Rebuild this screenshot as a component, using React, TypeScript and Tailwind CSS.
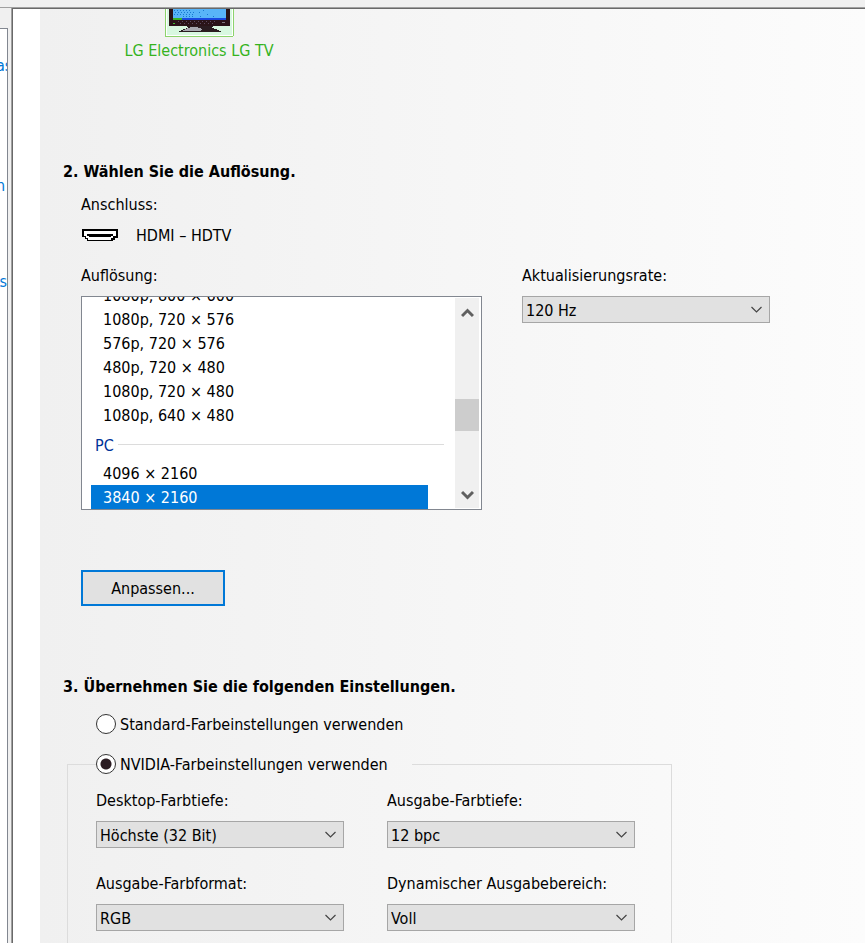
import { useId } from 'react';
import type { ReactNode } from 'react';

const resolutions = [
  '1080p, 800 × 600',
  '1080p, 720 × 576',
  '576p, 720 × 576',
  '480p, 720 × 480',
  '1080p, 720 × 480',
  '1080p, 640 × 480',
];

const pcResolutions = ['4096 × 2160', '3840 × 2160'];

function SelectField({ label, options }: { label: string; options: string[] }) {
  const id = useId();
  return (
    <div className="w-[248px]">
      <label htmlFor={id} className="block h-6 leading-[26px] mb-[9px] whitespace-nowrap">{label}</label>
      <div className="relative">
        <select
          id={id}
          className="block w-full h-[27px] appearance-none bg-[#e1e1e1] border border-[#a6a6a6] pt-0.5 pl-[3px] pr-7 outline-none"
        >
          {options.map((option) => (
            <option key={option}>{option}</option>
          ))}
        </select>
        <svg className="absolute right-2 top-2 pointer-events-none" width="11" height="11" viewBox="0 0 11 11" fill="none">
          <path d="M0.5 3 L5.5 8 L10.5 3" stroke="#444" strokeWidth="1.2" />
        </svg>
      </div>
    </div>
  );
}

function Radio({ children, checked }: { children: ReactNode; checked?: boolean }) {
  return (
    <label className="flex items-center h-6 leading-[26px] gap-1 whitespace-nowrap">
      <input
        type="radio"
        name="color-settings"
        defaultChecked={checked}
        className="appearance-none size-5 shrink-0 rounded-full bg-white border border-[#333] checked:bg-[radial-gradient(circle,#2b1c22_5px,white_6px)]"
      />
      <span className="h-6">{children}</span>
    </label>
  );
}

function TvIcon() {
  return (
    <svg width="69" height="29" viewBox="0 0 69 29" className="block" shapeRendering="crispEdges">
      <rect x="0" y="-6" width="69" height="34" rx="2" fill="#8cd46c" />
      <rect x="1" y="-6" width="67" height="33" fill="#fff" />
      <rect x="2" y="-6" width="65" height="32" fill="#d8f8e0" />
      <rect x="4" y="-6" width="61" height="23" fill="#2a1418" />
      <rect x="8" y="-6" width="53" height="16" fill="#58b4f8" />
      <path d="M9 1.5h17M10 3.5h20M9 5.5h20M18 7.5h12" stroke="#1878d0" strokeDasharray="1 2" />
      <path d="M34 3.5h1M38 1.5h1M42 5.5h1M48 7.5h1M35 7.5h1" stroke="#1878d0" />
      <rect x="8" y="9" width="53" height="2" fill="#1848e0" />
      <rect x="8" y="9" width="9" height="2" fill="#38b428" />
      <path d="M8 14.5h2" stroke="#40c030" />
      <path d="M13 12.5h38M15 14.5h36" stroke="#5c4a60" strokeDasharray="1 3" />
      <path d="M57 13.5h3" stroke="#807880" />
      <path d="M22 17h26v1h-1v1h2v1h3v1h2v1h2v1H14v-1h2v-1h2v-1h3v-1h2v-1h-1z" fill="#2a1c20" />
      <path d="M25 18h8v1h3v1h1v1h-1v1H18v-1h2v-1h2v-1h3z" fill="#a8a8b0" />
    </svg>
  );
}

function Scrollbar() {
  return (
    <div className="w-6 shrink-0 my-px mr-0.5 bg-[#f0f0f0] flex flex-col">
      <button aria-label="Nach oben" className="h-7 w-full flex items-center justify-center">
        <svg width="13" height="11" viewBox="0 0 13 11" fill="none">
          <path d="M1 9 L6.5 3.5 L12 9" stroke="#606060" strokeWidth="3" />
        </svg>
      </button>
      <div className="h-8 w-full bg-[#cdcdcd] mt-[73px]" />
      <div className="grow" />
      <button aria-label="Nach unten" className="h-7 w-full flex items-center justify-center">
        <svg width="13" height="11" viewBox="0 0 13 11" fill="none">
          <path d="M1 3 L6.5 8.5 L12 3" stroke="#606060" strokeWidth="3" />
        </svg>
      </button>
    </div>
  );
}

function ResolutionList() {
  return (
    <div role="listbox" aria-label="Auflösung" className="w-[401px] h-[214px] flex bg-white border border-[#828790] overflow-hidden">
      <div className="grow pl-[9px] flex flex-col justify-end overflow-hidden">
        {resolutions.map((r) => (
          <div key={r} role="option" aria-selected={false} className="h-6 shrink-0 leading-[26px] pl-3">{r}</div>
        ))}
        <div className="h-[34px] shrink-0 flex items-center gap-1 pl-1 pr-[11px] text-[#003399]">
          <span className="pt-1">PC</span>
          <div className="grow h-px bg-[#dcdcdc]" />
        </div>
        {pcResolutions.map((r) => (
          <div
            key={r}
            role="option"
            aria-selected={r === '3840 × 2160'}
            className="h-6 shrink-0 leading-[26px] pl-3 mr-[27px] aria-selected:bg-[#0078d7] aria-selected:text-white"
          >
            {r}
          </div>
        ))}
      </div>
      <Scrollbar />
    </div>
  );
}

function Sidebar() {
  return (
    <nav className="w-2 shrink-0 mt-5 bg-white border-t border-r border-[#828790] overflow-hidden text-[#0078d7]">
      <div className="flex flex-col pt-[25px] leading-6">
        <a href="#a" className="-ml-1">as</a>
        <a href="#b" className="mt-24 self-end pr-0.5">n</a>
        <a href="#c" className="mt-[72px] self-end">s</a>
      </div>
    </nav>
  );
}

export default function App() {
  return (
    <div className="h-screen flex flex-col overflow-hidden bg-[#f0f0f0] text-black text-[16px] font-['DejaVu_Sans_Condensed','Noto_Sans',sans-serif]">
      <div className="h-2 shrink-0 border-b border-[#a0a0a0]" />
      <div className="grow min-h-0 flex">
        <Sidebar />
        <div className="w-[3px] shrink-0" />
        <main className="grow border-l border-[#a0a0a0] overflow-hidden">
          <div className="h-full border-l border-t border-[#696969] bg-white pl-[27px]">
            <div className="min-h-full bg-linear-to-r from-[#f0f0f0] to-[#fcfcfc] pl-[23px]">
              <div className="w-[272px] flex flex-col items-center text-[#36b31e]">
                <TvIcon />
                <span className="h-6 leading-[26px]">LG Electronics LG TV</span>
              </div>

              <section className="mt-[97px]">
                <h2 className="font-bold h-6 leading-[26px]">2. Wählen Sie die Auflösung.</h2>
                <div className="pl-[18px]">
                  <p className="mt-[9px] h-6 leading-[26px]">Anschluss:</p>
                  <div className="mt-[7px] h-6 flex items-center gap-[18px]">
                    <svg width="37" height="13" viewBox="0 0 37 13" shapeRendering="crispEdges">
                      <path d="M1 0h36v9h-3v2h-2v1H6v-2H4V8H1z" fill="#000" />
                      <path d="M3 2h32v5h-3v2h-2v2H7V9H5V7H3z" fill="#fff" />
                      <path d="M6 5h26v2h-2v1H8V7H6z" fill="#000" />
                    </svg>
                    <span className="h-6 leading-[26px]">HDMI – HDTV</span>
                  </div>
                  <div className="mt-4 flex gap-10">
                    <div>
                      <p className="h-6 leading-[26px] mb-[9px]">Auflösung:</p>
                      <ResolutionList />
                    </div>
                    <SelectField label="Aktualisierungsrate:" options={['120 Hz', '60 Hz']} />
                  </div>
                  <button className="mt-[60px] block w-36 h-9 pt-0.5 bg-[#e1e1e1] border-2 border-[#0078d7]">Anpassen...</button>
                </div>
              </section>

              <section className="mt-[68px]">
                <h2 className="font-bold h-6 leading-[26px]">3. Übernehmen Sie die folgenden Einstellungen.</h2>
                <div className="pl-[33px] mt-[14px]">
                  <Radio>Standard-Farbeinstellungen verwenden</Radio>
                </div>
                <fieldset className="ml-1 mt-4 w-[605px] h-[220px] border border-[#dcdcdc] pl-7">
                  <legend className="pr-6">
                    <Radio checked>NVIDIA-Farbeinstellungen verwenden</Radio>
                  </legend>
                  <div className="mt-3 grid grid-cols-[248px_248px] gap-x-[43px] gap-y-[23px]">
                    <SelectField label="Desktop-Farbtiefe:" options={['Höchste (32 Bit)']} />
                    <SelectField label="Ausgabe-Farbtiefe:" options={['12 bpc', '10 bpc', '8 bpc']} />
                    <SelectField label="Ausgabe-Farbformat:" options={['RGB', 'YCbCr422', 'YCbCr444']} />
                    <SelectField label="Dynamischer Ausgabebereich:" options={['Voll', 'Begrenzt']} />
                  </div>
                </fieldset>
              </section>
            </div>
          </div>
        </main>
      </div>
    </div>
  );
}
